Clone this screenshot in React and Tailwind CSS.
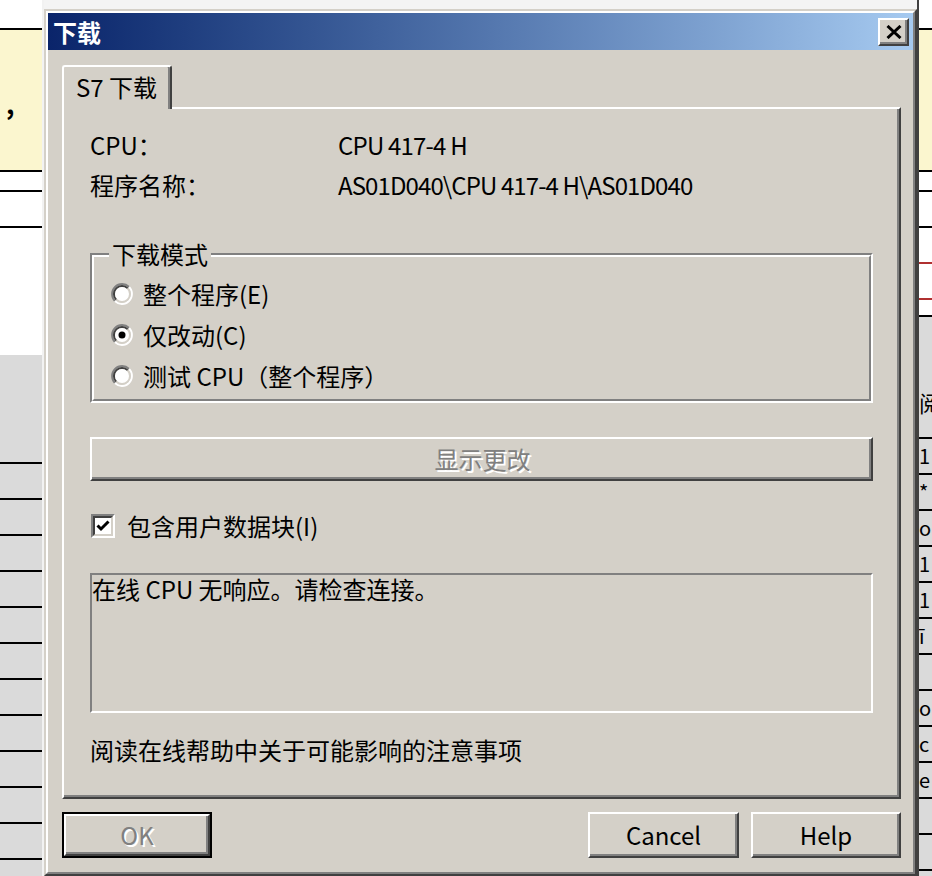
import React from "react";

// raised 3D edge used by the buttons
function Raised({ children, className = "" }) {
  return (
    <div
      className={
        "flex items-center justify-center border-2 border-t-white border-l-white border-r-[#404040] border-b-[#404040] bg-[#d4d0c8] shadow-[inset_-2px_-2px_0_#808080] " +
        className
      }
    >
      {children}
    </div>
  );
}

function Radio({ checked }) {
  return (
    <svg width="22" height="22" viewBox="0 0 22 22" className="shrink-0">
      <path d="M3.93 18.07 A10 10 0 0 1 18.07 3.93" fill="none" stroke="#808080" strokeWidth="2" />
      <path d="M18.07 3.93 A10 10 0 0 1 3.93 18.07" fill="none" stroke="#ffffff" strokeWidth="2" />
      <path d="M5.34 16.66 A8 8 0 0 1 16.66 5.34" fill="none" stroke="#404040" strokeWidth="2" />
      <path d="M16.66 5.34 A8 8 0 0 1 5.34 16.66" fill="none" stroke="#d4d0c8" strokeWidth="2" />
      <circle cx="11" cy="11" r="7" fill="#ffffff" />
      {checked && <circle cx="11" cy="11" r="3.5" fill="#000000" />}
    </svg>
  );
}

function Checkbox() {
  return (
    <div className="h-[24px] w-[24px] shrink-0 border-2 border-t-[#808080] border-l-[#808080] border-r-white border-b-white">
      <div className="flex h-full w-full items-center justify-center border-2 border-t-[#404040] border-l-[#404040] border-r-[#d4d0c8] border-b-[#d4d0c8] bg-white">
        <svg width="14" height="14" viewBox="0 0 14 14">
          <path d="M1.5 6.5 L5 10 L12.5 2.5" fill="none" stroke="#000" strokeWidth="3" />
        </svg>
      </div>
    </div>
  );
}

function LeftStrip() {
  const rows = Array.from({ length: 12 });
  return (
    <div className="flex w-[44px] shrink-0 flex-col border-r-2 border-[#f2f2f2]">
      <div className="h-[28px] shrink-0 bg-white" />
      <div className="h-[2px] shrink-0 bg-black" />
      <div className="h-[140px] shrink-0 bg-[#fbf6cf] pl-[6px] pt-[60px] text-[26px] font-bold leading-none">,</div>
      <div className="h-[2px] shrink-0 bg-black" />
      <div className="h-[18px] shrink-0 bg-white" />
      <div className="h-[2px] shrink-0 bg-black" />
      <div className="h-[34px] shrink-0 bg-white" />
      <div className="h-[2px] shrink-0 bg-black" />
      <div className="h-[127px] shrink-0 bg-white" />
      <div className="h-[107px] shrink-0 bg-[#dadada]" />
      {rows.map((_, i) => (
        <div key={i} className="h-[36px] shrink-0 border-t-2 border-black bg-[#dadada]" />
      ))}
    </div>
  );
}

function RightStrip() {
  const chars = ["1", "*", "o", "1", "1", "ī", "", "o", "c", "e", "", "", ""];
  return (
    <div className="flex min-w-0 flex-1 flex-col overflow-hidden border-l-2 border-[#404040]">
      <div className="h-[28px] shrink-0 bg-white" />
      <div className="h-[2px] shrink-0 bg-black" />
      <div className="h-[140px] shrink-0 bg-[#fbf6cf]" />
      <div className="h-[2px] shrink-0 bg-black" />
      <div className="h-[18px] shrink-0 bg-white" />
      <div className="h-[2px] shrink-0 bg-black" />
      <div className="h-[34px] shrink-0 bg-white" />
      <div className="h-[2px] shrink-0 bg-black" />
      <div className="h-[34px] shrink-0 bg-white" />
      <div className="h-[2px] shrink-0 bg-[#b03030]" />
      <div className="h-[34px] shrink-0 bg-white" />
      <div className="h-[2px] shrink-0 bg-[#b03030]" />
      <div className="h-[15px] shrink-0 bg-white" />
      <div className="flex h-[122px] shrink-0 items-end border-t-2 border-black bg-[#dadada] pb-[24px] text-[22px] leading-none">阅</div>
      {chars.map((c, i) => (
        <div key={i} className="flex h-[36px] shrink-0 items-center border-t-2 border-black bg-[#dadada] text-[20px] leading-none">
          {c}
        </div>
      ))}
    </div>
  );
}

function Dialog() {
  return (
    <div className="flex flex-1 flex-col border-2 border-t-[#d4d0c8] border-l-[#d4d0c8] border-r-[#404040] border-b-[#404040] bg-[#d4d0c8]">
      <div className="flex flex-1 flex-col border-2 border-t-white border-l-white border-r-[#808080] border-b-[#808080]">
        {/* title bar */}
        <div className="flex h-[37px] shrink-0 items-center justify-between bg-linear-to-r from-[#0a246a] to-[#a6caf0] pl-[5px] pr-[4px]">
          <span className="text-[24px] font-bold leading-none text-white">下载</span>
          <Raised className="h-[28px] w-[31px]">
            <svg width="16" height="14" viewBox="0 0 16 14">
              <path d="M1.5 1 L14.5 13 M14.5 1 L1.5 13" stroke="#000" strokeWidth="3" />
            </svg>
          </Raised>
        </div>

        {/* body */}
        <div className="flex flex-1 flex-col pl-[14px] pr-[12px] pt-[15px]">
          <div className="flex">
            <div className="relative z-10 -mb-[2px] flex h-[44px] w-[110px] items-center rounded-t-[3px] border-l-2 border-t-2 border-r-2 border-t-white border-l-white border-r-[#404040] bg-[#d4d0c8] pb-[2px] pl-[12px] text-[24px] leading-none shadow-[inset_-2px_0_0_#808080]">
              S7 下载
            </div>
          </div>

          <div className="h-[692px] shrink-0 border-2 border-t-white border-l-white border-r-[#404040] border-b-[#404040] px-[26px] pt-[16px] text-[24px] leading-none shadow-[inset_-2px_-2px_0_#808080]">
            <div className="grid grid-cols-[248px_1fr]">
              <div className="flex h-[40px] items-center">CPU：</div>
              <div className="flex h-[40px] items-center tracking-[-0.8px]">CPU 417-4 H</div>
              <div className="flex h-[40px] items-center">程序名称：</div>
              <div className="flex h-[40px] items-center tracking-[-0.9px]">AS01D040\CPU 417-4 H\AS01D040</div>
            </div>

            {/* group box */}
            <div className="mt-[48px] border-2 border-t-[#808080] border-l-[#808080] border-r-white border-b-white">
              <div className="flex flex-col border-2 border-t-white border-l-white border-r-[#808080] border-b-[#808080] pb-[3px]">
                <span className="-mt-[15px] ml-[15px] h-[24px] self-start bg-[#d4d0c8] px-[3px]">下载模式</span>
                <div className="mt-[7px] flex flex-col pl-[17px]">
                  <div className="flex h-[41px] items-center gap-[10px]">
                    <Radio />
                    <span>整个程序(E)</span>
                  </div>
                  <div className="flex h-[41px] items-center gap-[10px]">
                    <Radio checked />
                    <span>仅改动(C)</span>
                  </div>
                  <div className="flex h-[41px] items-center gap-[10px]">
                    <Radio />
                    <span>测试 CPU（整个程序）</span>
                  </div>
                </div>
              </div>
            </div>

            <Raised className="mt-[34px] h-[44px] w-full">
              <span className="pl-[2px] text-[#808080] [text-shadow:2px_2px_0_#ffffff]">显示更改</span>
            </Raised>

            <div className="mt-[30px] flex h-[30px] items-center gap-[12px] pl-[1px]">
              <Checkbox />
              <span>包含用户数据块(I)</span>
            </div>

            <div className="mt-[32px] h-[140px] border-2 border-t-[#808080] border-l-[#808080] border-r-white border-b-white pt-[2px]">
              <div className="flex h-[24px] items-center">在线 CPU 无响应。请检查连接。</div>
            </div>

            <div className="mt-[22px] flex h-[30px] items-center">阅读在线帮助中关于可能影响的注意事项</div>
          </div>

          {/* footer buttons */}
          <div className="mt-[13px] flex h-[46px] shrink-0 justify-between text-[24px] leading-none">
            <div className="h-[46px] w-[150px] border-2 border-black">
              <Raised className="h-full w-full">
                <span className="text-[#808080] [text-shadow:2px_2px_0_#ffffff]">OK</span>
              </Raised>
            </div>
            <div className="flex gap-[12px]">
              <Raised className="h-[46px] w-[151px]">Cancel</Raised>
              <Raised className="h-[46px] w-[150px]">Help</Raised>
            </div>
          </div>
        </div>
      </div>
    </div>
  );
}

export default function App() {
  return (
    <div className="flex h-[876px] w-[932px] overflow-hidden bg-white font-['Noto_Sans_CJK_SC','Noto_Sans',sans-serif] text-black">
      <LeftStrip />
      <div className="flex w-[873px] shrink-0 flex-col bg-[#f4f4f4] pt-[9px]">
        <Dialog />
      </div>
      <RightStrip />
    </div>
  );
}
